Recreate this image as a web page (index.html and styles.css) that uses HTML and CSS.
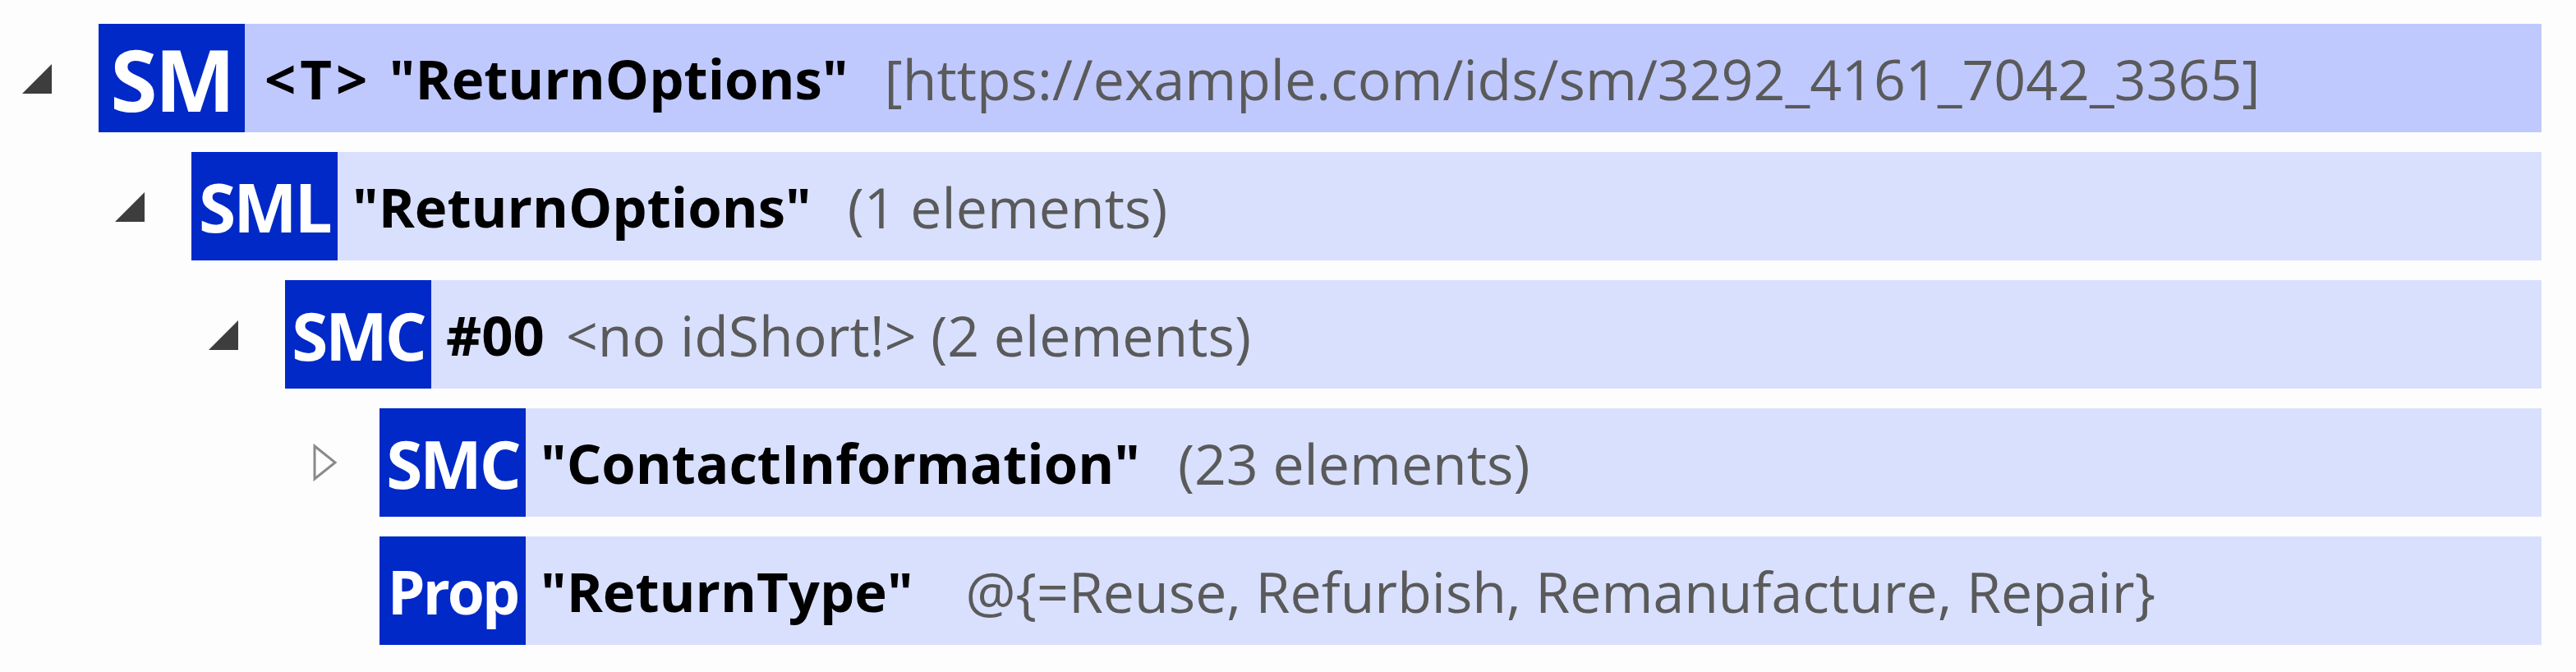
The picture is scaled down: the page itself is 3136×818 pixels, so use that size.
FILE: index.html
```html
<!DOCTYPE html>
<html>
<head>
<meta charset="utf-8">
<link rel="stylesheet" href="styles.css">
</head>
<body>
<div class="tree">
  <div class="row lvl0">
    <div class="exp">
      <svg class="tri-open" width="36" height="36" viewBox="0 0 36 36"><polygon points="36,0 36,36 0,36" fill="#3d3d3d"/></svg>
    </div>
    <div class="bar selected">
      <div class="badge b-sm">SM</div>
      <span class="label first"><span class="tag">&lt;T&gt;</span> "ReturnOptions"</span>
      <span class="info g48">[https://example.com/ids/sm/3292_4161_7042_3365]</span>
    </div>
  </div>
  <div class="row lvl1">
    <div class="exp">
      <svg class="tri-open" width="36" height="36" viewBox="0 0 36 36"><polygon points="36,0 36,36 0,36" fill="#3d3d3d"/></svg>
    </div>
    <div class="bar">
      <div class="badge b-sml">SML</div>
      <span class="label">"ReturnOptions"</span>
      <span class="info g44">(1 elements)</span>
    </div>
  </div>
  <div class="row lvl2">
    <div class="exp">
      <svg class="tri-open" width="36" height="36" viewBox="0 0 36 36"><polygon points="36,0 36,36 0,36" fill="#3d3d3d"/></svg>
    </div>
    <div class="bar">
      <div class="badge b-smc">SMC</div>
      <span class="label">#00</span>
      <span class="info g28">&lt;no idShort!&gt; (2 elements)</span>
    </div>
  </div>
  <div class="row lvl3">
    <div class="exp">
      <svg class="tri-closed" width="32" height="46" viewBox="0 0 32 46"><polygon points="3,3 28,23 3,43" fill="none" stroke="#8a8a8a" stroke-width="3" stroke-linejoin="miter"/></svg>
    </div>
    <div class="bar">
      <div class="badge b-smc">SMC</div>
      <span class="label">"ContactInformation"</span>
      <span class="info g46">(23 elements)</span>
    </div>
  </div>
  <div class="row lvl3">
    <div class="exp"></div>
    <div class="bar">
      <div class="badge b-prop">Prop</div>
      <span class="label">"ReturnType"</span>
      <span class="info g66">@{=Reuse, Refurbish, Remanufacture, Repair}</span>
    </div>
  </div>
</div>
</body>
</html>
```

FILE: styles.css
```css
html, body {
  margin: 0;
  padding: 0;
  background: #fdfdfd;
}

.tree {
  width: 3094px;
  padding-top: 29px;
  display: flex;
  flex-direction: column;
  gap: 24px;
  font-family: "Open Sans", "Noto Sans", sans-serif;
}

.row {
  display: flex;
  height: 132px;
}

.lvl0 { margin-left: 0; }
.lvl1 { margin-left: 113px; }
.lvl2 { margin-left: 227px; }
.lvl3 { margin-left: 342px; }

.exp {
  width: 120px;
  flex: none;
  display: flex;
  align-items: center;
}

.tri-open {
  margin-left: 27px;
  margin-top: 2px;
}

.tri-closed {
  margin-left: 38px;
}

.bar {
  flex: 1;
  display: flex;
  align-items: center;
  background: #d9e0fd;
  white-space: nowrap;
}

.bar.selected {
  background: #c0c9fd;
}

.badge {
  width: 178px;
  height: 132px;
  flex: none;
  background: #0029c7;
  color: #ffffff;
  font-weight: 700;
  display: flex;
  align-items: center;
  justify-content: center;
  letter-spacing: -3px;
}

.b-sm { font-size: 104px; }
.b-sml { font-size: 82px; }
.b-smc { font-size: 80px; }
.b-prop { font-size: 73px; }

.label {
  margin-left: 18px;
  font-size: 67px;
  font-weight: 700;
  color: #000000;
}

.label.first {
  margin-left: 24px;
}

.tag {
  letter-spacing: 5px;
  margin-right: 4px;
}

.info {
  font-size: 68px;
  color: #5a5a5a;
}

.g28 { margin-left: 26px; }
.g44 { margin-left: 44px; }
.g46 { margin-left: 46px; }
.g48 { margin-left: 44px; }
.g66 { margin-left: 64px; }
```
